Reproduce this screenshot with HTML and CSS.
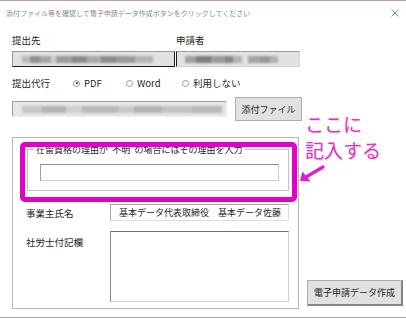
FILE: index.html
```html
<!DOCTYPE html>
<html lang="ja">
<head>
    <meta charset="UTF-8">
    <meta name="viewport" content="width=device-width, initial-scale=1.0">
    <title>電子申請データ作成</title>
    <link rel="stylesheet" href="styles.css">
</head>
<body>
<div class="window">
    <div class="titlebar">
        <span class="title">添付ファイル等を確認して電子申請データ作成ボタンをクリックしてください</span>
        <svg class="close" width="8" height="8" viewBox="0 0 8 8"><path d="M0.5 0.5L7.5 7.5M7.5 0.5L0.5 7.5" stroke="#8c8c8c" stroke-width="1"/></svg>
    </div>

    <div class="content">
        <div class="top-fields">
            <div class="col col-dest">
                <div class="label">提出先</div>
                <div class="field field-dest"><span class="smudge smudge-dest"></span></div>
            </div>
            <div class="col col-applicant">
                <div class="label">申請者</div>
                <div class="field field-applicant"><span class="smudge smudge-a1"></span><span class="smudge smudge-a2"></span></div>
            </div>
        </div>

        <div class="proxy-row">
            <span class="label-inline">提出代行</span>
            <label class="opt"><span class="radio on"></span>PDF</label>
            <label class="opt"><span class="radio"></span>Word</label>
            <label class="opt"><span class="radio"></span>利用しない</label>
        </div>

        <div class="file-row">
            <div class="field field-file"><span class="smudge smudge-file"></span></div>
            <button class="btn btn-attach">添付ファイル</button>
        </div>

        <div class="bottom-area">
            <div class="group">
                <fieldset class="reason">
                    <legend>在留資格の理由が"不明"の場合にはその理由を入力</legend>
                    <div class="input reason-input"></div>
                </fieldset>
                <div class="form-row first">
                    <span class="row-label">事業主氏名</span>
                    <div class="input owner">基本データ代表取締役　基本データ佐藤</div>
                </div>
                <div class="form-row">
                    <span class="row-label note-label">社労士付記欄</span>
                    <div class="textarea"></div>
                </div>
            </div>
            <button class="btn btn-submit">電子申請データ作成</button>
        </div>
    </div>
    <div class="footer-line"></div>

    <!-- annotation drawn over the dialog -->
    <div class="highlight"></div>
    <div class="callout">ここに<br>記入する</div>
    <svg class="arrow" width="32" height="26" viewBox="0 0 32 26">
        <path d="M27 7L10 17" stroke="#e21cc8" stroke-width="3.2" stroke-linecap="round"/>
        <polygon points="4,21 6.5,11.5 14.5,21.5" fill="#e21cc8"/>
    </svg>
</div>
</body>
</html>
```

FILE: styles.css
```css
body {
    margin: 0;
    background: #fff;
    font-family: "Noto Sans CJK JP", sans-serif;
    color: #1e1e1e;
    overflow: hidden;
}
.window {
    position: relative;
    width: 406px;
    height: 320px;
    border-top: 1px solid #c4a1a1;
    box-sizing: border-box;
    overflow: hidden;
}
.titlebar {
    height: 23px;
    display: flex;
    align-items: center;
    justify-content: space-between;
    padding: 0 7px 0 6px;
    font-size: 7px;
    color: #8c8c8c;
}
.content {
    padding: 10px 0 0 12px;
}

/* top two fields */
.top-fields {
    display: flex;
    gap: 1px;
}
.col-dest {
    width: 163px;
}
.col-applicant {
    width: 124px;
}
.label {
    font-size: 9.5px;
    line-height: 12px;
    height: 12px;
    margin-bottom: 5px;
}
.field {
    height: 16px;
    box-sizing: border-box;
    background: #e2e2e2;
    display: flex;
    align-items: center;
}
.field-dest {
    border: 1px solid #9c9c9c;
    border-right-color: #1e1e1e;
    border-bottom-color: #1e1e1e;
    padding-left: 9px;
}
.field-applicant {
    border: 1px solid #d4d4d4;
    border-top-color: #9c9c9c;
    border-left-color: #1e1e1e;
    padding-left: 8px;
    gap: 6px;
}
.smudge {
    display: block;
    height: 7px;
    filter: blur(1.1px);
}
.smudge-dest {
    width: 131px;
    background: linear-gradient(90deg, #b8b8b8 0 6%, #8f8f8f 6% 14%, #a5a5a5 14% 22%, #cdcdcd 22% 26%, #9c9c9c 26% 38%, #8a8a8a 38% 50%, #a8a8a8 50% 60%, #8c8c8c 60% 72%, #999 72% 86%, #b5b5b5 86% 100%);
}
.smudge-a1 {
    width: 57px;
    background: linear-gradient(90deg, #a0a0a0 0 20%, #7e7e7e 20% 45%, #9a9a9a 45% 70%, #858585 70% 85%, #b4b4b4 85% 100%);
}
.smudge-a2 {
    width: 30px;
    background: linear-gradient(90deg, #a4a4a4 0 40%, #999 40% 75%, #b2b2b2 75% 100%);
}

/* proxy radios */
.proxy-row {
    display: grid;
    grid-template-columns: 61px 53px 56px auto;
    align-items: center;
    height: 12px;
    margin-top: 10px;
    font-size: 9.5px;
    line-height: 12px;
}
.opt {
    display: flex;
    align-items: center;
    gap: 4px;
}
.radio {
    position: relative;
    width: 7px;
    height: 7px;
    border: 1px solid #9a9a9a;
    border-radius: 50%;
    box-sizing: border-box;
    background: #fff;
}
.radio.on::after {
    content: "";
    position: absolute;
    left: 1.5px;
    top: 1.5px;
    width: 2px;
    height: 2px;
    border-radius: 50%;
    background: #1e1e1e;
}

/* attachment row */
.file-row {
    display: flex;
    align-items: center;
    gap: 8px;
    margin-top: 8px;
    height: 24px;
}
.field-file {
    width: 215px;
    background: #e6e6e6;
    border: 1px solid #f0f0f0;
    border-top-color: #a0a0a0;
    border-left-color: #a0a0a0;
    padding-left: 9px;
}
.smudge-file {
    width: 200px;
    background: linear-gradient(90deg, #c6c6c6 0 10%, #b4b4b4 10% 22%, #cfcfcf 22% 30%, #bababa 30% 48%, #c9c9c9 48% 56%, #b3b3b3 56% 70%, #c3c3c3 70% 85%, #b8b8b8 85% 100%);
}
.btn {
    font-family: inherit;
    font-size: 9px;
    color: #1e1e1e;
    background: #e1e1e1;
    border: 1px solid #adadad;
    padding: 0;
    box-sizing: border-box;
}
.btn-attach {
    width: 67px;
    height: 24px;
}

/* bottom group */
.bottom-area {
    display: flex;
    align-items: flex-end;
    gap: 8px;
    margin-top: 16px;
}
.group {
    width: 287px;
    box-sizing: border-box;
    border: 1px solid #b8b8b8;
    padding: 6px 9px 6px 14px;
}
.reason {
    margin: 0;
    min-width: 0;
    padding: 9px 9px 9px 12px;
    border: 1px solid #c2c2c2;
}
.reason legend {
    font-size: 9px;
    line-height: 11px;
    padding: 0 2px;
    margin-left: -6px;
}
.input {
    height: 17px;
    box-sizing: border-box;
    background: #fff;
    border: 1px solid #cdcdcd;
    border-top-color: #8e8e8e;
    border-left-color: #9a9a9a;
}
.form-row {
    display: grid;
    grid-template-columns: 83px 179px;
    align-items: start;
    margin-top: 10px;
}
.form-row.first {
    align-items: center;
    margin-top: 13px;
}
.row-label {
    font-size: 9.5px;
    line-height: 12px;
    margin-left: -1px;
}
.note-label {
    padding-top: 5px;
}
.owner {
    font-size: 9px;
    line-height: 15px;
    padding-left: 8px;
    white-space: nowrap;
    overflow: hidden;
    border-color: #dedede;
    border-top-color: #a6a6a6;
    border-left-color: #a6a6a6;
}
.textarea {
    height: 71px;
    box-sizing: border-box;
    border: 1px solid #d2d2d2;
    border-top-color: #6e6e6e;
    border-left-color: #8a8a8a;
}
.btn-submit {
    width: 96px;
    height: 26px;
    margin-bottom: 3px;
    border-right: 2px solid #858585;
    border-bottom: 2px solid #858585;
}
.footer-line {
    margin-top: 8px;
    border-top: 1px solid #a4a4a4;
}

/* annotation overlay */
.highlight {
    position: absolute;
    left: 20px;
    top: 141px;
    width: 277px;
    height: 60px;
    box-sizing: border-box;
    border: 5px solid #e202c6;
    border-radius: 5px;
}
.callout {
    position: absolute;
    left: 305px;
    top: 110px;
    font-size: 19px;
    line-height: 26px;
    font-weight: 400;
    color: #e22fcb;
    text-shadow: 0 0 2px #fff, 1px 1px 1px rgba(0, 0, 0, 0.18);
    white-space: nowrap;
}
.arrow {
    position: absolute;
    left: 296px;
    top: 159px;
}
```
